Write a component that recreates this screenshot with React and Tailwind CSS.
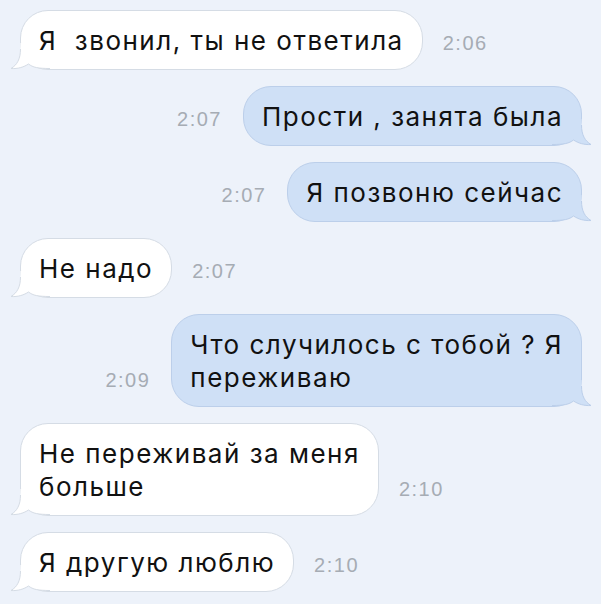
import React from 'react';

const messages = [
  { out: false, lines: ['Я  звонил, ты не ответила'], time: '2:06' },
  { out: true, lines: ['Прости , занята была'], time: '2:07' },
  { out: true, lines: ['Я позвоню сейчас'], time: '2:07' },
  { out: false, lines: ['Не надо'], time: '2:07' },
  { out: true, lines: ['Что случилось с тобой ? Я', 'переживаю'], time: '2:09' },
  { out: false, lines: ['Не переживай за меня', 'больше'], time: '2:10' },
  { out: false, lines: ['Я другую люблю'], time: '2:10' },
];

function Tail({ out }) {
  const fill = out ? '#cfe0f6' : '#ffffff';
  const stroke = out ? '#bccfea' : '#d5dce5';
  return (
    <svg
      width="40"
      height="27"
      viewBox="0 0 40 27"
      className={out ? 'absolute bottom-[-1px] right-[-11px] -scale-x-100' : 'absolute bottom-[-1px] left-[-11px]'}
    >
      <path d="M10.5 0 L10.5 6 C10.5 16 7 22 1 25.5 C8 26 14 24 18.5 21 C23 24.5 28 25.5 40 25.5 L40 0 Z" fill={fill} />
      <path d="M10.5 6 C10.5 16 7 22 1 25.5 C8 26 14 24 18.5 21 C23 24.5 28 25.5 40 25.5" fill="none" stroke={stroke} strokeWidth="1" />
    </svg>
  );
}

function Time({ value }) {
  return (
    <div className="mb-[17px] text-[20px] leading-[20px] tracking-[1.5px] text-[#a6acb4] font-['Liberation_Sans',Arial,sans-serif]">
      {value}
    </div>
  );
}

function Bubble({ out, lines }) {
  return (
    <div
      className={
        'relative rounded-[28px] border px-[18px] py-[12.5px] ' +
        (out ? 'bg-[#cfe0f6] border-[#bccfea]' : 'bg-white border-[#d5dce5]')
      }
    >
      <Tail out={out} />
      <div className="relative text-[26px] leading-[33px] tracking-[1.5px] text-[#111] whitespace-pre">
        {lines.map((l, i) => (
          <div key={i}>{l}</div>
        ))}
      </div>
    </div>
  );
}

export default function App() {
  return (
    <div className="w-[601px] h-[604px] overflow-hidden bg-[#edf2fa] font-['Inter','Liberation_Sans',sans-serif]">
      <div className="flex flex-col gap-[16px] pt-[10px] px-[19px]">
        {messages.map((m, i) =>
          m.out ? (
            <div key={i} className="flex items-end justify-end gap-[21px]">
              <Time value={m.time} />
              <Bubble out lines={m.lines} />
            </div>
          ) : (
            <div key={i} className="flex items-end gap-[20px] pl-[1px]">
              <Bubble lines={m.lines} />
              <Time value={m.time} />
            </div>
          )
        )}
      </div>
    </div>
  );
}
